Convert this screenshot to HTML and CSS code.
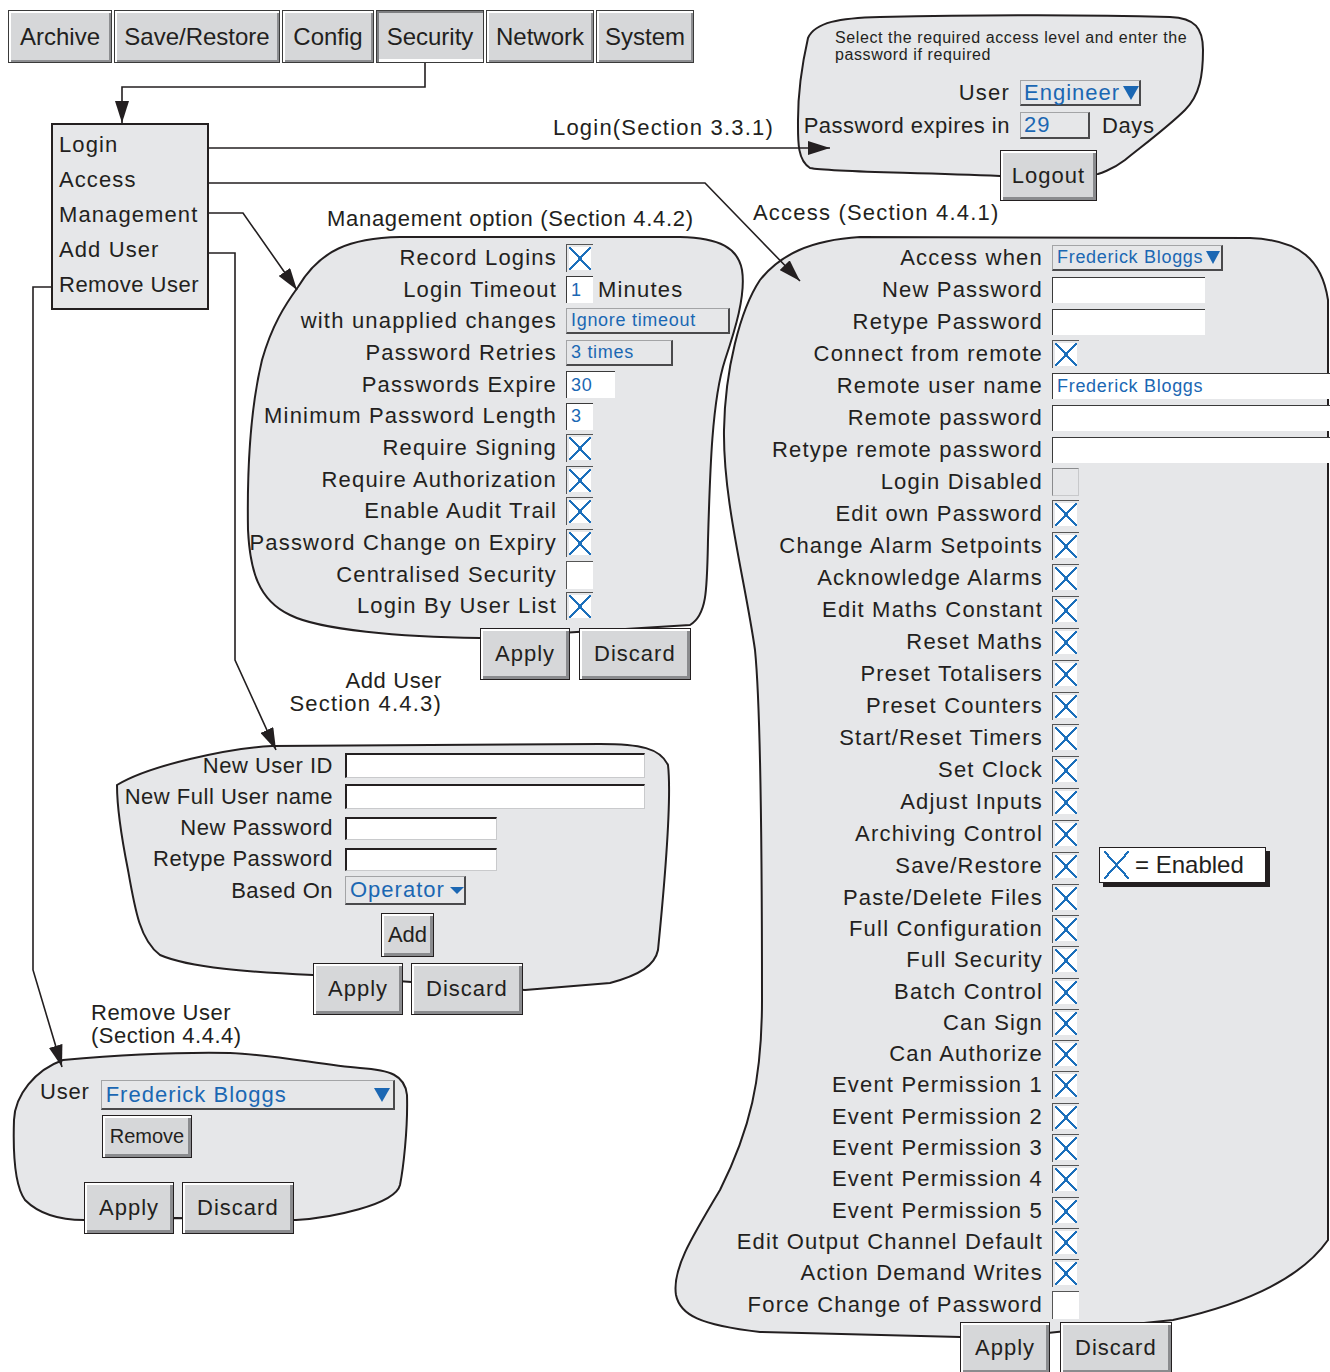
FILE: index.html
```html
<!DOCTYPE html>
<html>
<head>
<meta charset="utf-8" />
<link rel="stylesheet" href="styles.css">
</head>
<body>
<div class="canvas">

  <svg class="wires" width="1330" height="1372" viewBox="0 0 1330 1372">
    <defs>
      <marker id="ah" viewBox="0 0 22 14" refX="22" refY="7" markerWidth="22" markerHeight="14" markerUnits="userSpaceOnUse" orient="auto">
        <path d="M0 0 L22 7 L0 14 Z" fill="#231f20"/>
      </marker>
    </defs>
    <!-- panel outlines -->
    <g class="blob">
      <path d="M808 38 C815 22 840 18 880 17 C980 15 1100 15 1170 17 C1195 18 1203 28 1203 50 C1203 75 1200 95 1185 110 C1170 125 1150 140 1125 160 C1112 170 1098 174 1098 174 L1000 176 C900 172 830 172 810 168 C797 160 798 140 798 120 C798 90 803 60 808 38 Z"/>
      <path d="M298 287 C320 250 350 238 400 237 L680 237 C720 238 738 248 742 270 C746 295 735 330 725 360 C712 400 710 470 708 540 C707 590 707 615 690 625 L480 638 C400 637 320 630 290 615 C258 600 250 570 248 530 C247 470 250 410 262 360 C272 325 285 305 298 287 Z"/>
      <path d="M860 237 C810 240 780 255 760 280 C740 310 725 370 724 430 C723 500 745 580 755 650 C762 720 762 900 762 1000 C762 1080 750 1130 720 1190 C690 1240 672 1270 676 1295 C680 1315 700 1325 760 1332 L1000 1338 L1173 1320 C1240 1305 1300 1280 1328 1240 L1328 300 C1322 260 1300 240 1250 238 Z"/>
      <path d="M117 785 C150 765 230 748 272 746 L600 744 C640 744 660 748 668 765 C672 800 665 880 658 950 C655 965 640 975 610 983 L525 990 L313 975 C250 972 190 968 160 955 C140 940 135 910 128 870 C122 840 117 810 117 785 Z"/>
      <path d="M63 1060 C120 1055 180 1052 230 1053 C280 1055 320 1065 360 1068 C390 1070 405 1075 407 1095 C408 1130 403 1170 400 1185 C395 1205 330 1218 296 1220 L176 1218 L84 1220 C60 1220 40 1215 25 1200 C14 1185 13 1150 14 1120 C15 1095 35 1070 63 1060 Z"/>
    </g>
    <!-- connectors -->
    <g class="wire">
      <polyline points="425,63 425,87 122,87 122,123" marker-end="url(#ah)"/>
      <polyline points="209,148 830,148" marker-end="url(#ah)"/>
      <polyline points="209,183 705,183 800,281" marker-end="url(#ah)"/>
      <polyline points="209,213 243,213 297,290" marker-end="url(#ah)"/>
      <polyline points="209,253 235,253 235,660 276,750" marker-end="url(#ah)"/>
      <polyline points="51,287 33,287 33,970 62,1067" marker-end="url(#ah)"/>
    </g>
  </svg>

  <div class="node tabs">
    <span class="tab t-archive">Archive</span>
    <span class="tab t-save">Save/Restore</span>
    <span class="tab t-config">Config</span>
    <span class="tab t-security on">Security</span>
    <span class="tab t-network">Network</span>
    <span class="tab t-system">System</span>
  </div>

  <div class="node menu">
    <div>Login</div>
    <div>Access</div>
    <div>Management</div>
    <div>Add User</div>
    <div class="tight">Remove User</div>
  </div>

  <div class="node cap cap-login">Login(Section 3.3.1)</div>
  <div class="node cap cap-mgmt">Management option (Section 4.4.2)</div>
  <div class="node cap cap-access">Access (Section 4.4.1)</div>
  <div class="node cap cap-add"><div>Add User</div><div>Section 4.4.3)</div></div>
  <div class="node cap cap-remove"><div>Remove User</div><div>(Section 4.4.4)</div></div>

  <!-- login -->
  <div class="node login-note">Select the required access level and enter the<br>password if required</div>
  <div class="node login">
    <div class="login-grid">
      <span class="lbl">User</span>
      <span class="sel big w121">Engineer <i class="tri"></i></span>
      <span class="lbl">Password expires in</span>
      <span class="pair wide-gap"><span class="sel big w70 h27">29</span><span class="days">Days</span></span>
    </div>
    <span class="btn logout">Logout</span>
  </div>

  <!-- management -->
  <div class="node mgmt">
    <div class="form">
      <span class="lbl">Record Logins</span><span class="chk x"></span>
      <span class="lbl">Login Timeout</span><span class="pair"><span class="in w27 h27">1</span><span class="lbl">Minutes</span></span>
      <span class="lbl">with unapplied changes</span><span class="sel w164">Ignore timeout</span>
      <span class="lbl">Password Retries</span><span class="sel w107">3 times</span>
      <span class="lbl">Passwords Expire</span><span class="in w49 h27">30</span>
      <span class="lbl">Minimum Password Length</span><span class="in w27 h27">3</span>
      <span class="lbl">Require Signing</span><span class="chk x"></span>
      <span class="lbl">Require Authorization</span><span class="chk x"></span>
      <span class="lbl">Enable Audit Trail</span><span class="chk x"></span>
      <span class="lbl">Password Change on Expiry</span><span class="chk x"></span>
      <span class="lbl">Centralised Security</span><span class="chk"></span>
      <span class="lbl">Login By User List</span><span class="chk x"></span>
    </div>
    <div class="actions">
      <span class="btn">Apply</span>
      <span class="btn">Discard</span>
    </div>
  </div>

  <!-- access -->
  <div class="node access">
    <div class="form">
      <span class="lbl">Access when</span><span class="sel w171">Frederick Bloggs<i class="tri sm"></i></span>
      <span class="lbl">New Password</span><span class="in w153"></span>
      <span class="lbl">Retype Password</span><span class="in w153"></span>
      <span class="lbl">Connect from remote</span><span class="chk x"></span>
      <span class="lbl">Remote user name</span><span class="in wide">Frederick Bloggs</span>
      <span class="lbl">Remote password</span><span class="in wide"></span>
      <span class="lbl">Retype remote password</span><span class="in wide"></span>
      <span class="lbl">Login Disabled</span><span class="chk off"></span>
      <span class="lbl">Edit own Password</span><span class="chk x"></span>
      <span class="lbl">Change Alarm Setpoints</span><span class="chk x"></span>
      <span class="lbl">Acknowledge Alarms</span><span class="chk x"></span>
      <span class="lbl">Edit Maths Constant</span><span class="chk x"></span>
      <span class="lbl">Reset Maths</span><span class="chk x"></span>
      <span class="lbl">Preset Totalisers</span><span class="chk x"></span>
      <span class="lbl">Preset Counters</span><span class="chk x"></span>
      <span class="lbl">Start/Reset Timers</span><span class="chk x"></span>
      <span class="lbl">Set Clock</span><span class="chk x"></span>
      <span class="lbl">Adjust Inputs</span><span class="chk x"></span>
      <span class="lbl">Archiving Control</span><span class="chk x"></span>
      <span class="lbl">Save/Restore</span><span class="chk x"></span>
      <span class="lbl">Paste/Delete Files</span><span class="chk x"></span>
      <span class="lbl">Full Configuration</span><span class="chk x"></span>
      <span class="lbl">Full Security</span><span class="chk x"></span>
      <span class="lbl">Batch Control</span><span class="chk x"></span>
      <span class="lbl">Can Sign</span><span class="chk x"></span>
      <span class="lbl">Can Authorize</span><span class="chk x"></span>
      <span class="lbl">Event Permission 1</span><span class="chk x"></span>
      <span class="lbl">Event Permission 2</span><span class="chk x"></span>
      <span class="lbl">Event Permission 3</span><span class="chk x"></span>
      <span class="lbl">Event Permission 4</span><span class="chk x"></span>
      <span class="lbl">Event Permission 5</span><span class="chk x"></span>
      <span class="lbl">Edit Output Channel Default</span><span class="chk x"></span>
      <span class="lbl">Action Demand Writes</span><span class="chk x"></span>
      <span class="lbl">Force Change of Password</span><span class="chk"></span>
    </div>
    <div class="actions">
      <span class="btn">Apply</span>
      <span class="btn">Discard</span>
    </div>
  </div>

  <div class="node legend"><span class="mark"></span><span>= Enabled</span></div>

  <!-- add user -->
  <div class="node adduser">
    <div class="form">
      <span class="lbl">New User ID</span><span class="in dark w300 h25"></span>
      <span class="lbl">New Full User name</span><span class="in dark w300 h25"></span>
      <span class="lbl">New Password</span><span class="in dark w152 h23"></span>
      <span class="lbl">Retype Password</span><span class="in dark w152 h23"></span>
      <span class="lbl">Based On</span><span class="sel big w121 h29">Operator<i class="tri xs"></i></span>
    </div>
    <span class="btn add">Add</span>
    <div class="actions">
      <span class="btn">Apply</span>
      <span class="btn">Discard</span>
    </div>
  </div>

  <!-- remove user -->
  <div class="node remove">
    <div class="remove-row">
      <span class="lbl">User</span>
      <span class="sel big w294 h30">Frederick Bloggs<i class="tri"></i></span>
    </div>
    <span class="btn rm">Remove</span>
    <div class="actions">
      <span class="btn">Apply</span>
      <span class="btn">Discard</span>
    </div>
  </div>

</div>
</body>
</html>
```

FILE: styles.css
```css
body {
  margin: 0;
  background: #fff;
  color: #231f20;
  font-family: "Liberation Sans", Arial, sans-serif;
}
.canvas {
  position: relative;
  width: 1330px;
  height: 1372px;
  overflow: hidden;
}
.wires {
  position: absolute;
  left: 0;
  top: 0;
}
.blob path {
  fill: #e6e7e9;
  stroke: #231f20;
  stroke-width: 2;
}
.wire polyline {
  fill: none;
  stroke: #231f20;
  stroke-width: 1.6;
}
.node {
  position: absolute;
}

/* tab strip */
.tabs {
  left: 8px;
  top: 10px;
  display: flex;
  gap: 2px;
}
.tab {
  height: 53px;
  box-sizing: border-box;
  line-height: 51px;
  text-align: center;
  font-size: 24px;
  background: #d6d7d9;
  border: 1px solid #3a3a3a;
  box-shadow: inset 2px 2px 0 #fff, inset -2px -2px 0 #8d8e91;
}
.tab.on {
  box-shadow: inset 2px 2px 0 #7d7e81, inset 0 -3px 0 #fff;
}
.t-archive { width: 104px; }
.t-save { width: 166px; }
.t-config { width: 92px; }
.t-security { width: 108px; }
.t-network { width: 108px; }
.t-system { width: 98px; }

/* security menu */
.menu {
  left: 51px;
  top: 123px;
  width: 158px;
  height: 187px;
  box-sizing: border-box;
  border: 2px solid #231f20;
  background: #e6e7e9;
  padding: 2px 0 0 6px;
  font-size: 22px;
  letter-spacing: 1.1px;
  line-height: 35px;
  white-space: nowrap;
}
.menu .tight {
  letter-spacing: 0.5px;
}

/* captions */
.cap {
  font-size: 22px;
  letter-spacing: 1.2px;
  line-height: 23px;
  white-space: nowrap;
}
.cap-login { left: 553px; top: 116px; }
.cap-mgmt { left: 327px; top: 207px; letter-spacing: 0.7px; }
.cap-access { left: 753px; top: 201px; }
.cap-add { left: 240px; top: 669px; width: 202px; text-align: right; }
.cap-add div:first-child { letter-spacing: 0.6px; }
.cap-remove { left: 91px; top: 1001px; letter-spacing: 0.5px; }

/* shared controls */
.lbl {
  font-size: 22px;
  letter-spacing: 1.2px;
  white-space: nowrap;
}
.form {
  display: grid;
  align-items: center;
  justify-items: start;
}
.form > .lbl {
  justify-self: end;
}
.in, .sel {
  box-sizing: border-box;
  height: 26px;
  display: flex;
  align-items: center;
  gap: 3px;
  padding-left: 4px;
  color: #1b67b3;
  font-size: 18px;
  letter-spacing: 0.7px;
  white-space: nowrap;
}
.in {
  background: #fff;
  border-top: 1px solid #3a3a3a;
  border-left: 1px solid #3a3a3a;
}
.in.dark {
  border-top-width: 2px;
  border-left-width: 2px;
  border-top-color: #231f20;
  border-left-color: #231f20;
  border-right: 1px solid #c9cacc;
  border-bottom: 1px solid #c9cacc;
}
.sel {
  background: #e6e7e9;
  border: 1px solid #a3a4a6;
  border-right: 2px solid #4a4a4c;
  border-bottom: 2px solid #4a4a4c;
}
.sel.big {
  font-size: 22px;
  letter-spacing: 1px;
}
.tri {
  display: inline-block;
  width: 0;
  height: 0;
  margin-left: auto;
  margin-right: 3px;
  border-left: 8px solid transparent;
  border-right: 8px solid transparent;
  border-top: 14px solid #1b67b3;
}
.tri.sm {
  margin-left: 0;
  border-left-width: 7px;
  border-right-width: 7px;
  border-top-width: 13px;
}
.tri.xs {
  margin-left: 2px;
  border-left-width: 7px;
  border-right-width: 7px;
  border-top-width: 7px;
}
.chk {
  width: 27px;
  height: 28px;
  box-sizing: border-box;
  padding: 2px;
  background-color: #fff;
  border-top: 1px solid #555;
  border-left: 1px solid #555;
}
.chk.off {
  background-color: #e6e7e9;
  border-right: 1px solid #c8c9cb;
  border-bottom: 1px solid #c8c9cb;
  border-top-color: #8a8b8d;
  border-left-color: #8a8b8d;
}
.chk.x, .legend .mark {
  background-image:
    linear-gradient(to top right, transparent calc(50% - 1.1px), #1b6fbb calc(50% - 1.1px), #1b6fbb calc(50% + 1.1px), transparent calc(50% + 1.1px)),
    linear-gradient(to bottom right, transparent calc(50% - 1.1px), #1b6fbb calc(50% - 1.1px), #1b6fbb calc(50% + 1.1px), transparent calc(50% + 1.1px));
  background-origin: content-box;
  background-clip: content-box;
  background-repeat: no-repeat;
}
.chk.x {
  background-color: #fff;
}
.w27 { width: 27px; }
.w49 { width: 49px; }
.w70 { width: 70px; }
.w107 { width: 107px; }
.w121 { width: 121px; }
.w152 { width: 152px; }
.w153 { width: 153px; }
.w164 { width: 164px; }
.w171 { width: 171px; }
.w294 { width: 294px; }
.w300 { width: 300px; }
.wide { width: 300px; }
.h23 { height: 23px; }
.h25 { height: 25px; }
.h27 { height: 27px; }
.h29 { height: 29px; }
.h30 { height: 30px; }

.btn {
  display: flex;
  align-items: center;
  justify-content: center;
  box-sizing: border-box;
  height: 52px;
  padding: 0 14px;
  background: #d6d7d9;
  border: 1px solid #231f20;
  box-shadow: inset 2px 2px 0 #fff, inset -3px -3px 0 #8a8b8e;
  font-size: 22px;
  letter-spacing: 1px;
}
.actions {
  display: flex;
  gap: 9px;
}
.pair {
  display: flex;
  align-items: center;
  gap: 5px;
}
.pair.wide-gap {
  gap: 12px;
}

/* login */
.login-note {
  left: 835px;
  top: 29px;
  font-size: 16px;
  line-height: 17px;
  letter-spacing: 0.6px;
}
.login {
  left: 790px;
  top: 80px;
}
.login-grid {
  display: grid;
  grid-template-columns: 220px auto;
  column-gap: 10px;
  row-gap: 6px;
  align-items: center;
  justify-items: start;
}
.login-grid .lbl {
  justify-self: end;
  letter-spacing: 0.5px;
}
.login-grid .lbl:first-child {
  letter-spacing: 1.2px;
}
.login-grid .sel {
  padding-left: 3px;
}
.days {
  font-size: 22px;
  letter-spacing: 0.6px;
}
.logout {
  width: 97px;
  height: 51px;
  margin: 11px 0 0 210px;
}

/* management */
.mgmt {
  left: 237px;
  top: 242px;
}
.mgmt .form {
  grid-template-columns: 320px auto;
  grid-auto-rows: 31.7px;
  column-gap: 9px;
}
.mgmt .actions {
  margin: 6px 0 0 243px;
}

/* access */
.access {
  left: 700px;
  top: 242px;
}
.access .form {
  grid-template-columns: 343px auto;
  grid-template-rows: repeat(20, 32px) repeat(14, 31.3px);
  column-gap: 9px;
}
.access .actions {
  margin: 2px 0 0 260px;
  gap: 10px;
}
.legend {
  left: 1099px;
  top: 847px;
  width: 167px;
  height: 36px;
  box-sizing: border-box;
  display: flex;
  align-items: center;
  gap: 6px;
  padding-left: 4px;
  background: #fff;
  border: 1px solid #231f20;
  box-shadow: 4px 4px 0 #231f20;
  font-size: 24px;
}
.legend .mark {
  width: 25px;
  height: 28px;
}

/* add user */
.adduser {
  left: 110px;
  top: 750px;
}
.adduser .form {
  grid-template-columns: 223px auto;
  grid-auto-rows: 31.25px;
  column-gap: 12px;
}
.adduser .lbl {
  letter-spacing: 0.5px;
}
.add {
  width: 53px;
  height: 44px;
  padding: 0;
  margin: 7px 0 0 271px;
  letter-spacing: 0;
}
.adduser .actions {
  margin: 6px 0 0 203px;
  gap: 8px;
}

/* remove user */
.remove {
  left: 40px;
  top: 1080px;
}
.remove-row {
  display: flex;
  align-items: flex-start;
  gap: 11px;
}
.remove-row .lbl {
  margin-top: -1px;
  letter-spacing: 0.8px;
}
.rm {
  width: 90px;
  height: 43px;
  padding: 0;
  margin: 5px 0 0 62px;
  font-size: 20px;
  letter-spacing: 0;
}
.remove .actions {
  margin: 24px 0 0 44px;
  gap: 8px;
}
```
